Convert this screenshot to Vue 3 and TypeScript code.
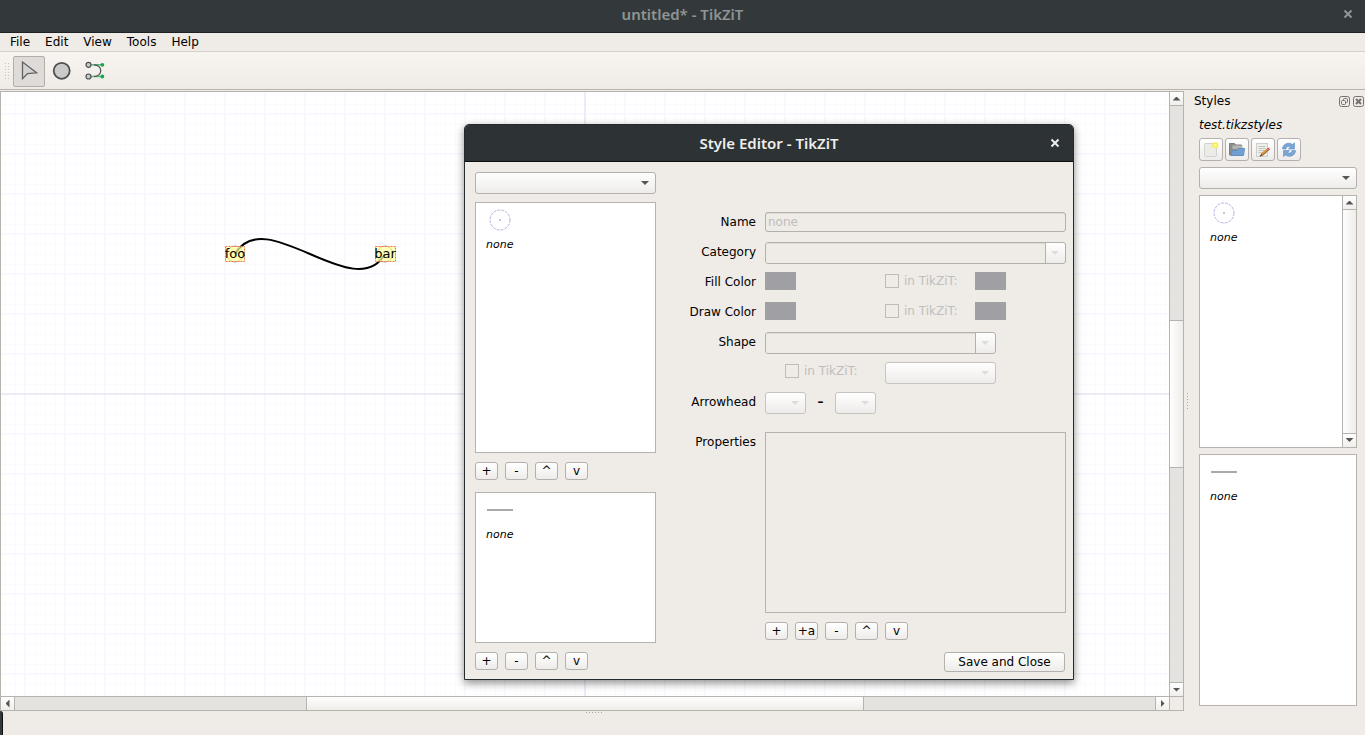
<script setup lang="ts">
import { ref } from 'vue'

const menus: string[] = ['File', 'Edit', 'View', 'Tools', 'Help']
const listActions: string[] = ['+', '-', '^', 'v']
const propertyActions: string[] = ['+', '+a', '-', '^', 'v']
const colorRows: { id: string; label: string }[] = [
  { id: 'fill', label: 'Fill Color' },
  { id: 'draw', label: 'Draw Color' },
]
const name = ref('none')
</script>

<template>
  <div class="window">
    <header class="titlebar">
      <h1>untitled* - TikZiT</h1>
      <button class="close" aria-label="Close window">
        <svg width="10" height="10" viewBox="0 0 10 10"><path d="M1.5 1.5 8.5 8.5M8.5 1.5 1.5 8.5" /></svg>
      </button>
    </header>

    <nav class="menubar">
      <button v-for="m in menus" :key="m">{{ m }}</button>
    </nav>

    <div class="toolbar">
      <span class="grip"></span>
      <button class="tool active" aria-label="Select">
        <svg width="32" height="32" viewBox="0 0 32 32">
          <path d="M9.5 7V23.6L14.5 18.6 23.6 17.8Z" fill="#d2d2d2" stroke="#606263" stroke-width="1.3" />
        </svg>
      </button>
      <button class="tool" aria-label="Add node">
        <svg width="32" height="32" viewBox="0 0 32 32">
          <circle cx="15.7" cy="15.8" r="8" fill="#cacaca" stroke="#4d4f50" stroke-width="1.8" />
        </svg>
      </button>
      <button class="tool" aria-label="Add edge">
        <svg width="32" height="32" viewBox="0 0 32 32">
          <path d="M12 9.800H23.500M12 21.500H23.500" stroke="#5cb981" stroke-width="1.5" />
          <path d="M14 9.800C23 9.800 23 21.500 14 21.500" transform="translate(1 0)" fill="none" stroke="#4d4f50" stroke-width="1.2" />
          <circle cx="9.500" cy="9.800" r="2.500" fill="#cacaca" stroke="#4d4f50" stroke-width="1.200" />
          <circle cx="9.500" cy="21.500" r="2.500" fill="#cacaca" stroke="#4d4f50" stroke-width="1.200" />
          <circle cx="23.300" cy="9.800" r="1.900" fill="#12a84b" />
          <circle cx="23.300" cy="21.500" r="1.900" fill="#12a84b" />
        </svg>
      </button>
    </div>

    <main class="workspace">
      <section class="editor">
        <div class="canvas">
          <svg class="drawing" width="100%" height="100%">
            <defs>
              <pattern id="minor" x="4" y="2" width="10" height="10" patternUnits="userSpaceOnUse">
                <path d="M0 .5H10M.5 0V10" stroke="#fbfbff" />
              </pattern>
              <pattern id="major" x="23" y="21" width="40" height="40" patternUnits="userSpaceOnUse">
                <path d="M0 1H40M1 0V40" stroke="#f8f8fe" stroke-width="2" />
              </pattern>
            </defs>
            <rect width="100%" height="100%" fill="url(#minor)" />
            <rect width="100%" height="100%" fill="url(#major)" />
            <path d="M584 0V2000M0 302H3000" stroke="#ececf8" stroke-width="2" />
            <path d="M234 162C264 110 354 214 384 162" fill="none" stroke="#000" stroke-width="2" />
            <g class="node">
              <circle cx="234" cy="162" r="8" />
              <rect x="224.500" y="154.500" width="19" height="15" />
              <text x="234" y="166">foo</text>
            </g>
            <g class="node">
              <circle cx="384" cy="162" r="8" />
              <rect x="374.500" y="154.500" width="20" height="15" />
              <text x="384" y="166">bar</text>
            </g>
          </svg>
        </div>
        <div class="scroll vertical">
          <button class="step up" aria-label="Scroll up"></button>
          <div class="track"><span class="room"></span><span class="thumb"></span><span class="room"></span></div>
          <button class="step down" aria-label="Scroll down"></button>
        </div>
        <div class="scroll horizontal">
          <button class="step left" aria-label="Scroll left"></button>
          <div class="track"><span class="room"></span><span class="thumb"></span><span class="room"></span></div>
          <button class="step right" aria-label="Scroll right"></button>
        </div>
        <span class="corner"></span>
      </section>

      <span class="splitter"></span>

      <aside class="dock">
        <div class="dock-head">
          <h2>Styles</h2>
          <button aria-label="Float panel">
            <svg width="11" height="11" viewBox="0 0 11 11">
              <rect x=".5" y=".5" width="10" height="10" rx="2" />
              <rect x="4.500" y="2.500" width="4" height="4" rx="1" /><rect x="2.500" y="4.500" width="4" height="4" rx="1" fill="#efebe7" />
            </svg>
          </button>
          <button aria-label="Close panel">
            <svg width="11" height="11" viewBox="0 0 11 11">
              <rect x=".5" y=".5" width="10" height="10" rx="2" /><path d="M3 3 8 8M8 3 3 8" stroke-width="2" />
            </svg>
          </button>
        </div>
        <div class="dock-body">
          <p class="file">test.tikzstyles</p>
          <div class="dock-tools">
            <button aria-label="New styles">
              <svg width="16" height="16" viewBox="0 0 16 16">
                <rect x="1.500" y="1.500" width="12" height="13" rx="1" fill="#ebebe8" stroke="#d2d2ce" />
                <circle cx="12.300" cy="3.300" r="3" fill="#f8f03c" /><circle cx="12.300" cy="3.300" r="1.300" fill="#fffcb0" />
              </svg>
            </button>
            <button aria-label="Open styles">
              <svg width="16" height="16" viewBox="0 0 16 16">
                <path d="M.5 13V1.500H5.500L6.500 3H12.500V13Z" fill="#8b8d88" stroke="#7c7e7a" />
                <path d="M3.500 3.500H13.500V7H3.500Z" fill="#b5b6b2" />
                <path d="M2 13.500 3 8.500H7.500L9 6.500H15.500L14.500 13.500Z" fill="#729fcf" stroke="#5f8fc4" />
              </svg>
            </button>
            <button aria-label="Edit styles">
              <svg width="16" height="16" viewBox="0 0 16 16">
                <rect x="1.500" y="1.500" width="11" height="13" fill="#eeeeeb" stroke="#cfcfcb" />
                <path d="M3.500 4.500H10.500M3.500 6.500H10.500M3.500 8.500H9M3.500 10.500H6.500" stroke="#c4c5c1" />
                <path d="M6.500 13 13.500 7" stroke="#9a6228" stroke-width="2.600" />
                <path d="M6.800 12.400 13 7" stroke="#f0a03c" stroke-width="1.200" />
                <path d="M13 7.400 14.300 6.300" stroke="#d85a55" stroke-width="2.400" />
                <path d="M5 14.200 6.800 12.800" stroke="#42413c" stroke-width="1.200" />
              </svg>
            </button>
            <button aria-label="Reload styles">
              <svg width="16" height="16" viewBox="0 0 16 16" fill="#7ba6d4" stroke="#5c8cc2" stroke-width=".6">
                <path d="M1.500 7C1.500 2 7.500 -.5 11.500 2.500L13.500 .8V7H7.500L9.500 5C7 3.800 5 4.800 5 7Z" />
                <path d="M14.500 8.500C14.500 13.500 8.500 16 4.500 13L2.500 14.700V8.500H8.500L6.500 10.500C9 11.700 11 10.700 11 8.500Z" />
              </svg>
            </button>
          </div>
          <span class="combo"><select aria-label="Style category"></select></span>
          <div class="list">
            <div class="item">
              <svg width="32" height="32" viewBox="0 0 32 32"><circle class="ring" cx="16" cy="16" r="10" /><circle cx="16" cy="16" r="1" fill="#aeaedd" /></svg>
              <span>none</span>
            </div>
            <div class="scroll vertical inner">
              <button class="step up" aria-label="Scroll styles up"></button>
              <div class="track"><span class="thumb"></span></div>
              <button class="step down" aria-label="Scroll styles down"></button>
            </div>
          </div>
          <div class="list">
            <div class="item">
              <svg width="32" height="32" viewBox="0 0 32 32"><path class="dash" d="M3 16H29" /></svg>
              <span>none</span>
            </div>
          </div>
        </div>
      </aside>
    </main>

    <footer class="status"><span class="tab"></span><span class="handle"></span></footer>

    <div class="dialog" role="dialog" aria-labelledby="dialog-title">
      <header class="dialog-title">
        <h2 id="dialog-title">Style Editor - TikZiT</h2>
        <button class="close" aria-label="Close dialog">
          <svg width="10" height="10" viewBox="0 0 10 10"><path d="M1.5 1.5 8.5 8.5M8.5 1.5 1.5 8.5" /></svg>
        </button>
      </header>
      <div class="dialog-body">
        <div class="styles">
          <span class="combo"><select aria-label="Category filter"></select></span>
          <div class="list tall">
            <div class="item">
              <svg width="32" height="32" viewBox="0 0 32 32"><circle class="ring" cx="16" cy="16" r="10" /><circle cx="16" cy="16" r="1" fill="#aeaedd" /></svg>
              <span>none</span>
            </div>
          </div>
          <div class="actions"><button v-for="a in listActions" :key="a">{{ a }}</button></div>
          <div class="list short">
            <div class="item">
              <svg width="32" height="32" viewBox="0 0 32 32"><path class="dash" d="M3 16H29" /></svg>
              <span>none</span>
            </div>
          </div>
          <div class="actions"><button v-for="a in listActions" :key="a">{{ a }}</button></div>
        </div>

        <form class="form" @submit.prevent>
          <div class="row">
            <label class="caption" for="name">Name</label>
            <input id="name" v-model="name" class="text" type="text" disabled />
          </div>
          <div class="row">
            <label class="caption" for="category">Category</label>
            <span class="combo editable off"><select id="category" disabled></select></span>
          </div>
          <div v-for="c in colorRows" :key="c.id" class="row">
            <label class="caption" :for="c.id">{{ c.label }}</label>
            <div class="colors">
              <button :id="c.id" class="swatch" type="button" disabled></button>
              <label class="check"><input type="checkbox" disabled />in TikZiT:</label>
              <button class="swatch" type="button" :aria-label="c.label + ' in TikZiT'" disabled></button>
            </div>
          </div>
          <div class="row">
            <label class="caption" for="shape">Shape</label>
            <span class="combo editable off shape"><select id="shape" disabled></select></span>
          </div>
          <div class="row">
            <span></span>
            <div class="shape-tikzit">
              <label class="check"><input type="checkbox" disabled />in TikZiT:</label>
              <span class="combo off"><select aria-label="Shape in TikZiT" disabled></select></span>
            </div>
          </div>
          <div class="row">
            <label class="caption" for="arrow-tail">Arrowhead</label>
            <div class="arrows">
              <span class="combo off"><select id="arrow-tail" disabled></select></span>
              <b>–</b>
              <span class="combo off"><select aria-label="Arrow tip" disabled></select></span>
            </div>
          </div>
          <div class="row properties">
            <label class="caption" for="properties">Properties</label>
            <textarea id="properties" disabled></textarea>
          </div>
          <div class="row">
            <span></span>
            <div class="actions"><button v-for="a in propertyActions" :key="a" type="button">{{ a }}</button></div>
          </div>
          <button class="save" type="submit">Save and Close</button>
        </form>
      </div>
    </div>
  </div>
</template>

<style>
body {
  margin: 0;
  background: #efebe7;
}
</style>

<style scoped>
* {
  box-sizing: border-box;
}
.window {
  position: relative;
  display: flex;
  flex-direction: column;
  height: 100vh;
  min-height: 700px;
  overflow: hidden;
  background: #efebe7;
  color: #000;
  font: 12px/20px 'DejaVu Sans', sans-serif;
}
button,
input,
select,
textarea {
  margin: 0;
  padding: 0;
  border: 0;
  background: none;
  color: inherit;
  font: inherit;
}
h1,
h2,
p {
  margin: 0;
  font-size: 12px;
  font-weight: normal;
}
svg {
  display: block;
}

.titlebar,
.dialog-title {
  display: grid;
  grid-template-columns: 34px 1fr 34px;
  align-items: center;
  text-align: center;
}
.titlebar {
  height: 33px;
  padding-bottom: 4px;
  border-bottom: 1px solid #1e2224;
  background: #33393b;
  color: #8f9494;
}
.titlebar h1,
.dialog-title h2 {
  grid-column: 2;
  font: 600 15px/20px 'Noto Sans', sans-serif;
}
.close {
  display: flex;
  justify-content: center;
}
.close path {
  fill: none;
  stroke: currentColor;
  stroke-width: 2;
}

.menubar {
  display: flex;
  gap: 15px;
  height: 19px;
  padding: 0 10px;
  border-bottom: 1px solid #d3d0cd;
  line-height: 18px;
}
.toolbar {
  display: flex;
  align-items: center;
  height: 38px;
  padding: 1px 0 0 5px;
  border-bottom: 1px solid #b8b2ad;
  background: linear-gradient(#f8f5f1, #efebe7);
}
.grip {
  width: 4px;
  height: 16px;
  margin-right: 4px;
  border: 0 solid transparent;
  background:
    repeating-linear-gradient(#c6c3bf 0 1px, transparent 1px 3px) 0 0 / 1px 100% no-repeat,
    repeating-linear-gradient(#c6c3bf 0 1px, transparent 1px 3px) 3px 0 / 1px 100% no-repeat;
}
.tool {
  display: flex;
  align-items: center;
  justify-content: center;
  width: 32px;
  height: 31px;
  margin-right: 1px;
  border-radius: 2px;
}
.tool svg {
  flex: none;
}
.tool.active {
  border: 1px solid #b3aeaa;
  background: #dfdbd8;
}

.workspace {
  display: flex;
  flex: 1;
  min-height: 0;
  padding-top: 1px;
}
.editor {
  display: grid;
  flex: 1;
  grid-template: 1fr 15px / 1fr 15px;
  min-width: 0;
  border: 1px solid #b6b3af;
  border-width: 1px 0 0 1px;
}
.canvas {
  overflow: hidden;
  background: #fff;
}
.node circle {
  fill: #fff;
  fill-opacity: 0.3;
  stroke: #9a9ac8;
}
.node rect {
  fill: #ffff80;
  fill-opacity: 0.6;
  stroke: #ee7755;
  stroke-dasharray: 2 1;
}
.node text {
  font-size: 13px;
  text-anchor: middle;
}

.scroll {
  display: flex;
  border: 1px solid #b6b3af;
}
.scroll.vertical {
  flex-direction: column;
  border-width: 0 1px;
}
.scroll.horizontal {
  border-width: 1px 0;
}
.scroll.inner {
  width: 14px;
  border-right: 0;
}
.corner {
  border: 1px solid #b6b3af;
}
.track {
  display: flex;
  flex: 1;
  background: #e4e3df;
}
.vertical .track {
  flex-direction: column;
}
.room {
  flex: 215;
}
.thumb {
  flex: 146;
  border: 0 solid #b6b3af;
}
.vertical .thumb {
  border-width: 1px 0;
  background: linear-gradient(90deg, #fefefd, #efedea);
}
.horizontal .room {
  flex: 292;
}
.horizontal .thumb {
  flex: 556;
  border-width: 0 1px;
  background: linear-gradient(#fefefd, #efedea);
}
.step {
  display: flex;
  flex: none;
  align-items: center;
  justify-content: center;
  width: 14px;
  height: 14px;
  border: 0 solid #b6b3af;
  background: linear-gradient(#fefefe, #f1efed);
}
.step::after {
  width: 8px;
  height: 4px;
  background: #555753;
  content: '';
}
.step.up {
  border-bottom-width: 1px;
}
.step.down {
  border-top-width: 1px;
}
.step.left {
  border-right-width: 1px;
}
.step.right {
  border-left-width: 1px;
}
.step.up::after {
  clip-path: polygon(50% 0, 100% 100%, 0 100%);
}
.step.down::after {
  clip-path: polygon(0 0, 100% 0, 50% 100%);
}
.step.left::after,
.step.right::after {
  width: 4px;
  height: 8px;
}
.step.left::after {
  clip-path: polygon(100% 0, 100% 100%, 0 50%);
}
.step.right::after {
  clip-path: polygon(0 0, 100% 50%, 0 100%);
}
.horizontal .step {
  height: 13px;
}
.vertical .step {
  width: 13px;
}
.inner .thumb {
  border: 0;
}

.splitter {
  align-self: center;
  width: 1px;
  height: 16px;
  margin: 0 3px;
  background: repeating-linear-gradient(#aaa7a3 0 1px, transparent 1px 3px);
}
.dock {
  display: flex;
  flex-direction: column;
  width: 174px;
}
.dock-head {
  display: flex;
  align-items: center;
  gap: 3px;
  height: 20px;
  padding: 0 1px 0 3px;
}
.dock-head h2 {
  flex: 1;
}
.dock-head svg {
  fill: none;
  stroke: #74726f;
}
.dock-body {
  display: flex;
  flex: 1;
  flex-direction: column;
  gap: 6px;
  min-height: 0;
  padding: 7px 8px 5px;
}
.file {
  line-height: 14px;
  font-style: italic;
}
.dock-tools {
  display: flex;
  gap: 2px;
}
.dock-tools button {
  display: flex;
  align-items: center;
  justify-content: center;
  width: 24px;
  height: 23px;
}
.dock-tools button,
.actions button,
.save,
.combo {
  border: 1px solid #b3b0ad;
  border-radius: 3px;
  background: linear-gradient(#fff, #eeecea);
}
.combo {
  position: relative;
  display: block;
  flex: none;
  height: 22px;
}
.combo select {
  display: block;
  width: 100%;
  height: 100%;
  appearance: none;
  opacity: 1;
}
.combo::after {
  position: absolute;
  top: 8px;
  right: 6px;
  width: 8px;
  height: 4px;
  background: #555753;
  clip-path: polygon(0 0, 100% 0, 50% 100%);
  content: '';
  pointer-events: none;
}
.combo.off {
  border-color: #c6c3c0;
}
.combo.off::after {
  background: #dfddda;
}
.combo.editable {
  border-color: #b3b0ad;
}
.editable select {
  width: calc(100% - 19px);
  border-right: 1px solid #b3b0ad;
  border-radius: 2px 0 0 2px;
  background: #efebe7;
  box-shadow: inset 0 1px #dedad6;
}
.list {
  display: flex;
  flex: 1;
  justify-content: space-between;
  border: 1px solid #b6b3af;
  background: #fff;
}
.item {
  padding: 1px 8px;
  font: italic 11px/18px 'DejaVu Sans', sans-serif;
}
.item span {
  padding-left: 2px;
}
.ring {
  fill: none;
  stroke: #b4b4e2;
  stroke-dasharray: 3 1;
}
.dash {
  stroke: #aaa;
  stroke-width: 2;
}

.status {
  display: grid;
  grid-template-columns: 3px 1fr 180px;
  align-items: end;
  height: 24px;
}
.tab {
  height: 33px;
  border-right: 1px solid #111;
  border-radius: 0 3px 0 0;
  background: #33393b;
}
.handle {
  align-self: start;
  justify-self: center;
  width: 16px;
  height: 1px;
  margin-top: 1px;
  background: repeating-linear-gradient(90deg, #aaa7a3 0 1px, transparent 1px 3px);
}

.dialog {
  position: absolute;
  top: 124px;
  left: 464px;
  width: 610px;
  border: 1px solid #24292b;
  border-radius: 5px 5px 0 0;
  background: #efebe7;
  box-shadow: 0 3px 8px rgb(0 0 0 / 45%);
}
.dialog-title {
  grid-template-columns: 36px 1fr 36px;
  height: 37px;
  border-bottom: 1px solid #0c0e0f;
  border-radius: 4px 4px 0 0;
  background: #2d3234;
  color: #eeeeec;
}
.dialog-body {
  display: flex;
  gap: 30px;
  padding: 10px 7px 7px 10px;
}
.styles {
  display: flex;
  flex-direction: column;
  width: 181px;
}
.list.tall {
  flex: none;
  height: 251px;
  margin-top: 8px;
}
.list.short {
  flex: none;
  height: 151px;
  margin-top: 12px;
}
.actions {
  display: flex;
  gap: 7px;
}
.styles .actions {
  margin-top: 9px;
}
.actions button {
  width: 23px;
  height: 18px;
  line-height: 15px;
  white-space: nowrap;
}
.form {
  display: flex;
  flex: 1;
  flex-direction: column;
  gap: 8px;
  padding-top: 40px;
}
.row {
  display: grid;
  grid-template-columns: 70px 1fr;
  gap: 9px;
  height: 22px;
}
.caption {
  text-align: right;
}
.text {
  width: 100%;
  height: 20px;
  padding: 0 2px;
  border: 1px solid #b3b0ad;
  border-radius: 3px;
  box-shadow: inset 0 1px #dedad6;
  color: #bebebe;
}
.colors {
  display: flex;
}
.swatch {
  width: 31px;
  height: 18px;
  background: #a09fa4;
}
.check {
  display: flex;
  align-items: center;
  gap: 5px;
  height: 18px;
  color: #bebebe;
}
.colors .check {
  width: 90px;
  margin-left: 89px;
}
.check input {
  width: 14px;
  height: 14px;
  border: 1px solid #bfbbb7;
  appearance: none;
}
.combo.shape {
  width: 231px;
}
.shape-tikzit {
  display: flex;
  padding-left: 20px;
}
.shape-tikzit .check {
  width: 100px;
}
.shape-tikzit .combo {
  width: 111px;
}
.arrows {
  display: flex;
}
.arrows .combo {
  width: 41px;
}
.arrows b {
  width: 29px;
  text-align: center;
}
.row.properties {
  height: 181px;
  margin: 10px 0 1px;
}
textarea {
  width: 100%;
  height: 100%;
  border: 1px solid #b6b3af;
  resize: none;
}
.save {
  align-self: flex-end;
  width: 121px;
  height: 20px;
  margin-right: 1px;
  line-height: 18px;
}
</style>
